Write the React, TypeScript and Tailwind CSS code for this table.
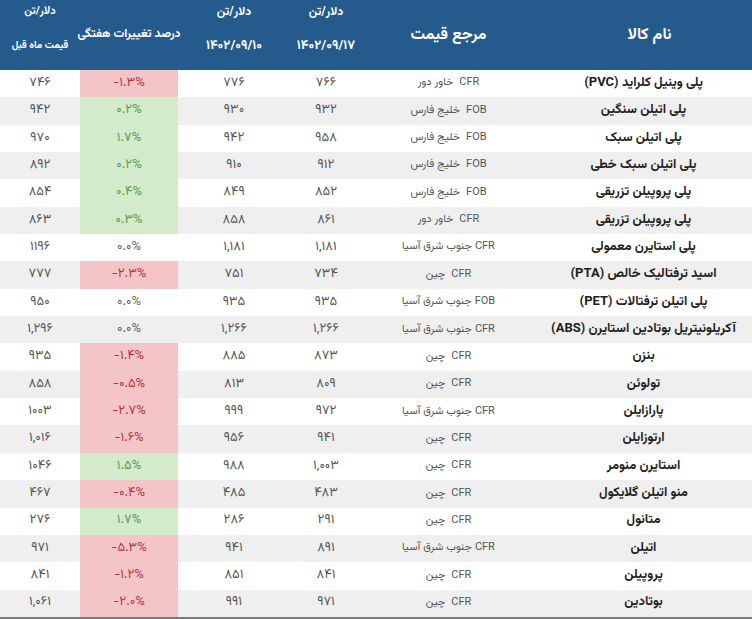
import React from "react";

type Tone = "red" | "green" | "none";
type Row = {
  name: string;
  ref: string;
  d17: string;
  d10: string;
  pct: string;
  tone: Tone;
  prev: string;
};

const rows: Row[] = [
  { name: "پلی وینیل کلراید (PVC)", ref: "CFR\u00a0\u00a0خاور دور", d17: "۷۶۶", d10: "۷۷۶", pct: "-۱.۳%", tone: "red", prev: "۷۴۶" },
  { name: "پلی اتیلن سنگین", ref: "FOB\u00a0\u00a0خلیج فارس", d17: "۹۳۲", d10: "۹۳۰", pct: "۰.۲%", tone: "green", prev: "۹۴۲" },
  { name: "پلی اتیلن سبک", ref: "FOB\u00a0\u00a0خلیج فارس", d17: "۹۵۸", d10: "۹۴۲", pct: "۱.۷%", tone: "green", prev: "۹۷۰" },
  { name: "پلی اتیلن سبک خطی", ref: "FOB\u00a0\u00a0خلیج فارس", d17: "۹۱۲", d10: "۹۱۰", pct: "۰.۲%", tone: "green", prev: "۸۹۲" },
  { name: "پلی پروپیلن تزریقی", ref: "FOB\u00a0\u00a0خلیج فارس", d17: "۸۵۲", d10: "۸۴۹", pct: "۰.۴%", tone: "green", prev: "۸۵۴" },
  { name: "پلی پروپیلن تزریقی", ref: "CFR\u00a0\u00a0خاور دور", d17: "۸۶۱", d10: "۸۵۸", pct: "۰.۳%", tone: "green", prev: "۸۶۳" },
  { name: "پلی استایرن معمولی", ref: "CFR جنوب شرق آسیا", d17: "۱,۱۸۱", d10: "۱,۱۸۱", pct: "۰.۰%", tone: "none", prev: "۱۱۹۶" },
  { name: "اسید ترفتالیک خالص (PTA)", ref: "CFR\u00a0\u00a0چین", d17: "۷۳۴", d10: "۷۵۱", pct: "-۲.۳%", tone: "red", prev: "۷۷۷" },
  { name: "پلی اتیلن ترفتالات (PET)", ref: "FOB جنوب شرق آسیا", d17: "۹۳۵", d10: "۹۳۵", pct: "۰.۰%", tone: "none", prev: "۹۵۰" },
  { name: "آکریلونیتریل بوتادین استایرن (ABS)", ref: "CFR جنوب شرق آسیا", d17: "۱,۲۶۶", d10: "۱,۲۶۶", pct: "۰.۰%", tone: "none", prev: "۱,۲۹۶" },
  { name: "بنزن", ref: "CFR\u00a0\u00a0چین", d17: "۸۷۳", d10: "۸۸۵", pct: "-۱.۴%", tone: "red", prev: "۹۳۵" },
  { name: "تولوئن", ref: "CFR\u00a0\u00a0چین", d17: "۸۰۹", d10: "۸۱۳", pct: "-۰.۵%", tone: "red", prev: "۸۵۸" },
  { name: "پارازایلن", ref: "CFR جنوب شرق آسیا", d17: "۹۷۲", d10: "۹۹۹", pct: "-۲.۷%", tone: "red", prev: "۱۰۰۳" },
  { name: "ارتوزایلن", ref: "CFR\u00a0\u00a0چین", d17: "۹۴۱", d10: "۹۵۶", pct: "-۱.۶%", tone: "red", prev: "۱,۰۱۶" },
  { name: "استایرن منومر", ref: "CFR\u00a0\u00a0چین", d17: "۱,۰۰۳", d10: "۹۸۸", pct: "۱.۵%", tone: "green", prev: "۱۰۴۶" },
  { name: "منو اتیلن گلایکول", ref: "CFR\u00a0\u00a0چین", d17: "۴۸۳", d10: "۴۸۵", pct: "-۰.۴%", tone: "red", prev: "۴۶۷" },
  { name: "متانول", ref: "CFR\u00a0\u00a0چین", d17: "۲۹۱", d10: "۲۸۶", pct: "۱.۷%", tone: "green", prev: "۲۷۶" },
  { name: "اتیلن", ref: "CFR جنوب شرق آسیا", d17: "۸۹۱", d10: "۹۴۱", pct: "-۵.۳%", tone: "red", prev: "۹۷۱" },
  { name: "پروپیلن", ref: "CFR\u00a0\u00a0چین", d17: "۸۴۱", d10: "۸۵۱", pct: "-۱.۲%", tone: "red", prev: "۸۴۱" },
  { name: "بوتادین", ref: "CFR\u00a0\u00a0چین", d17: "۹۷۱", d10: "۹۹۱", pct: "-۲.۰%", tone: "red", prev: "۱,۰۶۱" },
];

function pctClass(t: Tone) {
  if (t === "red") return "bg-[#f3c5c6] text-[#b8323f]";
  if (t === "green") return "bg-[#d3eacb] text-[#5a9b4c]";
  return "text-[#666]";
}

export default function App() {
  return (
    <div
      className="w-[752px] h-[619px] overflow-hidden bg-white"
      style={{ fontFamily: '"Vazirmatn", "Noto Sans Arabic", "DejaVu Sans", sans-serif' }}
    >
      {/* header */}
      <div className="flex h-[70px] bg-[#245a8c] text-white font-bold">
        <div className="w-[80px] flex flex-col items-center pt-[3px]">
          <div className="text-[11px] leading-[18px]">دلار/تن</div>
          <div className="text-[10px] leading-[18px] mt-[16px] whitespace-nowrap">قیمت ماه قبل</div>
        </div>
        <div className="w-[98px] flex items-center justify-center pb-[2px]">
          <div className="text-[12px] whitespace-nowrap">درصد تغییرات هفتگی</div>
        </div>
        <div className="w-[112px] flex flex-col items-center pt-[3px]">
          <div className="text-[12px] leading-[18px]">دلار/تن</div>
          <div dir="ltr" className="text-[13px] leading-[18px] mt-[16px] tracking-[1px]">۱۴۰۲/۰۹/۱۰</div>
        </div>
        <div className="w-[72px] flex flex-col items-center pt-[3px]">
          <div className="text-[12px] leading-[18px]">دلار/تن</div>
          <div dir="ltr" className="text-[13px] leading-[18px] mt-[16px] tracking-[1px] whitespace-nowrap">۱۴۰۲/۰۹/۱۷</div>
        </div>
        <div className="w-[173px] flex items-center justify-center pt-[2px]">
          <div className="text-[16px]">مرجع قیمت</div>
        </div>
        <div className="w-[217px] flex items-center justify-center pt-[2px] pl-[12px]">
          <div className="text-[16px]">نام کالا</div>
        </div>
      </div>

      {/* body */}
      <div className="flex flex-col">
        {rows.map((r, i) => (
          <div
            key={i}
            className={`flex h-[27.35px] items-stretch ${i % 2 === 0 ? "bg-white" : "bg-[#efefef]"}`}
          >
            <div dir="ltr" className="w-[80px] flex items-center justify-center text-[13px] text-[#555]">
              {r.prev}
            </div>
            <div dir="ltr" className={`w-[98px] flex items-center justify-center text-[13px] ${pctClass(r.tone)}`}>
              {r.pct}
            </div>
            <div dir="ltr" className="w-[112px] flex items-center justify-center text-[13px] text-[#555]">
              {r.d10}
            </div>
            <div dir="ltr" className="w-[72px] flex items-center justify-center text-[13px] text-[#555]">
              {r.d17}
            </div>
            <div dir="rtl" className="w-[173px] flex items-center justify-center text-[11px] text-[#555] whitespace-pre">
              {r.ref}
            </div>
            <div dir="rtl" className="w-[217px] flex items-center justify-center text-[13px] font-bold text-[#1e1e1e] whitespace-nowrap">
              {r.name}
            </div>
          </div>
        ))}
      </div>
      <div className="h-[2px] bg-[#7a7a7a]" />
    </div>
  );
}
